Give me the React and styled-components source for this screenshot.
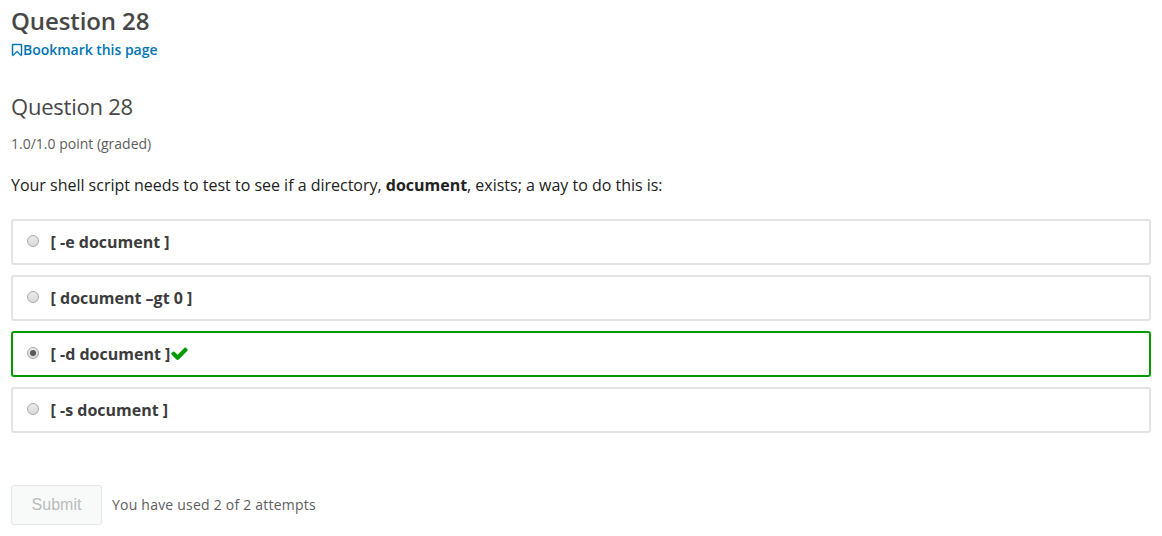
import React from 'react';
import styled, { createGlobalStyle } from 'styled-components';

const GlobalStyle = createGlobalStyle`
  * { box-sizing: border-box; }
  body {
    margin: 0;
    background: #fff;
    font-family: "Open Sans", "Noto Sans", sans-serif;
    color: #3c3c3c;
  }
`;

const Page = styled.main`
  padding: 4px 11px 0;
`;

const UnitTitle = styled.h2`
  margin: 0;
  font-size: 24px;
  font-weight: 600;
  line-height: 33px;
  letter-spacing: -0.1px;
  color: #474747;
`;

const BookmarkButton = styled.button`
  display: flex;
  align-items: center;
  margin: 1px 0 0;
  padding: 0;
  border: 0;
  background: none;
  font: 600 14px/24px "Open Sans", sans-serif;
  letter-spacing: -0.03px;
  color: #0075b4;
  svg {
    display: block;
    width: 14px;
    height: 14px;
    margin: 0 -1px;
    stroke: currentColor;
    stroke-width: 60;
  }
`;

const ProblemTitle = styled.h3`
  margin: 29px 0 0;
  font-size: 22px;
  font-weight: 400;
  line-height: 30px;
  letter-spacing: -0.23px;
  color: #474747;
`;

const Progress = styled.div`
  margin-top: 12px;
  font-size: 14px;
  line-height: 22px;
  color: #5e5e5e;
`;

const Prompt = styled.p`
  margin: 18px 0 0;
  font-size: 16px;
  line-height: 25px;
  letter-spacing: -0.01px;
  color: #222;
`;

const Choices = styled.div`
  display: flex;
  flex-direction: column;
  gap: 10px;
  margin-top: 21px;
`;

const Choice = styled.label`
  display: flex;
  align-items: center;
  height: 46px;
  padding: 0 14px;
  border: 2px solid ${(p) => (p.$correct ? '#009b00' : '#e3e3e3')};
  border-radius: 3px;
  font-size: 16px;
  font-weight: 700;
  line-height: 24px;
  color: #3c3c3c;
  svg { display: block; width: 19px; height: 19px; margin: 0 0 2px -0.5px; }
`;

const Radio = styled.span`
  display: flex;
  align-items: center;
  justify-content: center;
  width: 12px;
  height: 12px;
  margin: 0 11.6px 3px 0;
  border: 1px solid #aaa;
  border-radius: 50%;
  background: linear-gradient(#eaeaea, #dadada);
  &::after {
    content: '';
    width: 6px;
    height: 6px;
    border-radius: 50%;
    background: ${(p) => (p.$checked ? '#595959' : 'transparent')};
  }
`;

const Actions = styled.div`
  display: flex;
  align-items: center;
  gap: 10px;
  margin-top: 52px;
`;

const Submit = styled.button`
  width: 91px;
  height: 40px;
  padding: 0;
  border: 1px solid #e4e6e6;
  border-radius: 3px;
  background: #f8fafa;
  font: 16px "Liberation Sans", Arial, sans-serif;
  color: #b9baba;
`;

const Attempts = styled.span`
  font-size: 14px;
  line-height: 22px;
  letter-spacing: 0.22px;
  color: #5e5e5e;
`;

const BookmarkIcon = () => (
  <svg viewBox="0 0 1792 1792" fill="currentColor" aria-hidden="true">
    <path d="M1408 256h-1024v1242l423-406 89-85 89 85 423 406v-1242zm12-128q23 0 44 9 33 13 52.5 41t19.5 62v1289q0 34-19.5 62t-52.5 41q-19 8-44 8-48 0-83-32l-441-424-441 424q-36 33-83 33-23 0-44-9-33-13-52.5-41t-19.5-62v-1289q0-34 19.5-62t52.5-41q21-9 44-9h1048z" />
  </svg>
);

const CheckIcon = () => (
  <svg viewBox="0 0 1792 1792" fill="#009b00" aria-label="Correct">
    <path d="M1671 566q0 40-28 68l-724 724-136 136q-28 28-68 28t-68-28l-136-136-362-362q-28-28-28-68t28-68l136-136q28-28 68-28t68 28l294 295 656-657q28-28 68-28t68 28l136 136q28 28 28 68z" />
  </svg>
);

const choices = [
  { text: '[ -e document ]' },
  { text: '[ document –gt 0 ]' },
  { text: '[ -d document ]', correct: true },
  { text: '[ -s document ]' },
];

export default function App() {
  return (
    <Page>
      <GlobalStyle />
      <UnitTitle>Question 28</UnitTitle>
      <BookmarkButton>
        <BookmarkIcon />
        Bookmark this page
      </BookmarkButton>
      <ProblemTitle>Question 28</ProblemTitle>
      <Progress>1.0/1.0 point (graded)</Progress>
      <Prompt>
        Your shell script needs to test to see if a directory, <strong>document</strong>, exists; a way to do this is:
      </Prompt>
      <Choices>
        {choices.map((c) => (
          <Choice key={c.text} $correct={c.correct}>
            <Radio $checked={c.correct} />
            {c.text}
            {c.correct && <CheckIcon />}
          </Choice>
        ))}
      </Choices>
      <Actions>
        <Submit disabled>Submit</Submit>
        <Attempts>You have used 2 of 2 attempts</Attempts>
      </Actions>
    </Page>
  );
}
